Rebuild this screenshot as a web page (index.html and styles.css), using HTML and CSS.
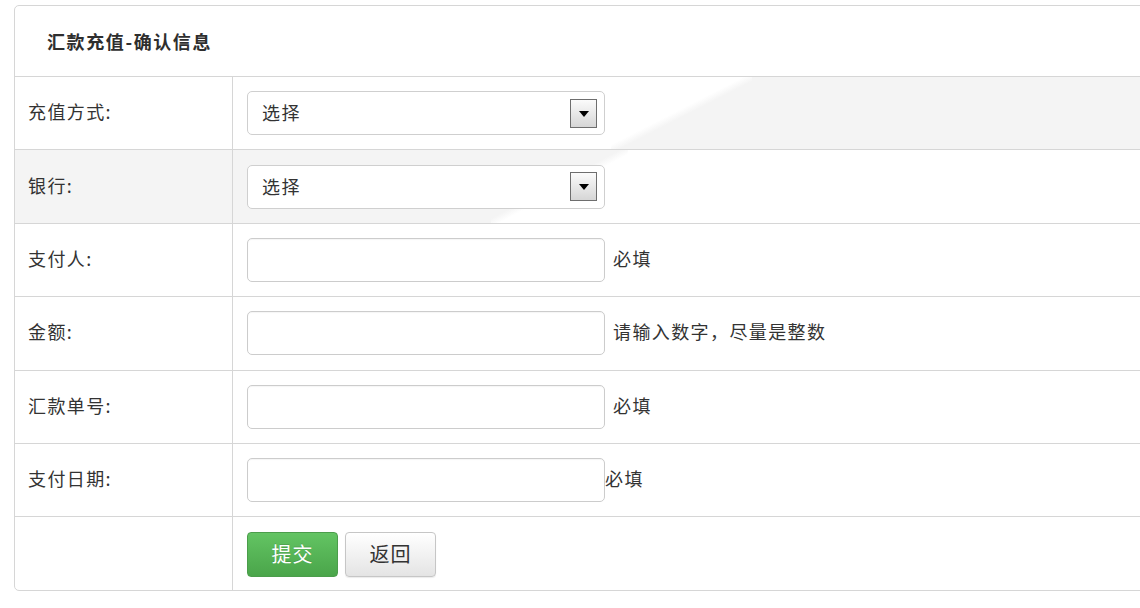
FILE: index.html
```html
<!DOCTYPE html>
<html lang="zh-CN">
<head>
<meta charset="utf-8">
<title>汇款充值-确认信息</title>
<link rel="stylesheet" href="styles.css">
</head>
<body>
<div class="panel">
  <div class="panel-head">汇款充值-确认信息</div>
  <div class="row row-a">
    <div class="label">充值方式:</div>
    <div class="field">
      <div class="select"><span class="select-text">选择</span><span class="arrow"><i></i></span></div>
    </div>
  </div>
  <div class="row row-b">
    <div class="label">银行:</div>
    <div class="field">
      <div class="select"><span class="select-text">选择</span><span class="arrow"><i></i></span></div>
    </div>
  </div>
  <div class="row">
    <div class="label">支付人:</div>
    <div class="field"><input class="input" type="text"><span class="hint">必填</span></div>
  </div>
  <div class="row">
    <div class="label">金额:</div>
    <div class="field"><input class="input" type="text"><span class="hint">请输入数字，尽量是整数</span></div>
  </div>
  <div class="row">
    <div class="label">汇款单号:</div>
    <div class="field"><input class="input" type="text"><span class="hint">必填</span></div>
  </div>
  <div class="row">
    <div class="label">支付日期:</div>
    <div class="field"><input class="input" type="text"><span class="hint hint-tight">必填</span></div>
  </div>
  <div class="row">
    <div class="label"></div>
    <div class="field buttons">
      <button class="btn btn-green" type="button">提交</button>
      <button class="btn btn-plain" type="button">返回</button>
    </div>
  </div>
</div>
</body>
</html>
```
FILE: styles.css
```css
html, body {
  margin: 0;
  padding: 0;
  background: #fff;
  overflow: hidden;
}
body {
  font-family: "Noto Sans CJK SC", "Noto Sans", sans-serif;
  color: #333;
  font-size: 18px;
  width: 1140px;
  height: 608px;
}
.panel {
  margin: 5px 0 0 14px;
  width: 1160px;
  border: 1px solid #d6d6d6;
  border-radius: 5px;
  background: #fff;
}
.panel-head {
  height: 70px;
  display: flex;
  align-items: center;
  padding-left: 32px;
  font-weight: bold;
  font-size: 18px;
  letter-spacing: 1.6px;
  color: #2e2e2e;
}
.row {
  display: grid;
  grid-template-columns: 218px 1fr;
  height: 73.4px;
  box-sizing: border-box;
  border-top: 1px solid #d6d6d6;
}
.row-a {
  background:
    linear-gradient(to bottom right, #fff 47%, #f4f4f4 53%) 596px 0 / 141px 100% no-repeat,
    linear-gradient(to right, transparent 737px, #f4f4f4 737px),
    #fff;
}
.row-b {
  background:
    linear-gradient(to bottom right, #f4f4f4 47%, #fff 53%) 476px 0 / 137px 100% no-repeat,
    linear-gradient(to right, #f4f4f4 476px, transparent 476px),
    #fff;
}
.label {
  border-right: 1px solid #d6d6d6;
  display: flex;
  align-items: center;
  padding-left: 13px;
  padding-bottom: 4px;
  letter-spacing: 1.4px;
  color: #333;
}
.field {
  display: flex;
  align-items: center;
  padding-left: 14px;
}
.select {
  width: 358px;
  height: 44px;
  box-sizing: border-box;
  border: 1px solid #cfcfcf;
  border-radius: 5px;
  background: #fff;
  display: flex;
  align-items: center;
  justify-content: space-between;
  padding-left: 14px;
  padding-right: 7px;
}
.select-text {
  letter-spacing: 1.4px;
  color: #333;
  padding-bottom: 2px;
}
.arrow {
  width: 27px;
  height: 29px;
  box-sizing: border-box;
  border: 1px solid #6e6e6e;
  background: linear-gradient(#fbfbfb, #d6d6d6);
  display: flex;
  align-items: center;
  justify-content: center;
}
.arrow i {
  width: 0;
  height: 0;
  border-left: 5px solid transparent;
  border-right: 5px solid transparent;
  border-top: 6px solid #000;
  margin-top: 1px;
}
.input {
  width: 358px;
  height: 44px;
  box-sizing: border-box;
  border: 1px solid #cccccc;
  border-radius: 5px;
  background: #fff;
  margin: 0;
  padding: 0 10px;
  box-shadow: inset 0 1px 1px rgba(0,0,0,0.04);
  font: inherit;
}
.hint {
  margin-left: 8px;
  letter-spacing: 1.4px;
  color: #333;
  padding-bottom: 4px;
}
.hint-tight {
  margin-left: 0;
}
.buttons {
  gap: 7px;
  padding-top: 2px;
}
.btn {
  width: 91px;
  height: 45px;
  box-sizing: border-box;
  border-radius: 4px;
  font-family: "Noto Sans CJK SC", "Noto Sans", sans-serif;
  font-size: 20px;
  letter-spacing: 1px;
  padding: 0 0 3px;
  margin: 0;
  cursor: pointer;
}
.btn-green {
  color: #fff;
  border: 1px solid #4b9d4b;
  background: linear-gradient(#63c463, #4aa54a);
  text-shadow: 0 -1px 0 rgba(0,0,0,0.15);
}
.btn-plain {
  color: #333;
  border: 1px solid #c6c6c6;
  background: linear-gradient(#ffffff, #e4e4e4);
  box-shadow: 0 1px 1px rgba(0,0,0,0.08);
}
```
